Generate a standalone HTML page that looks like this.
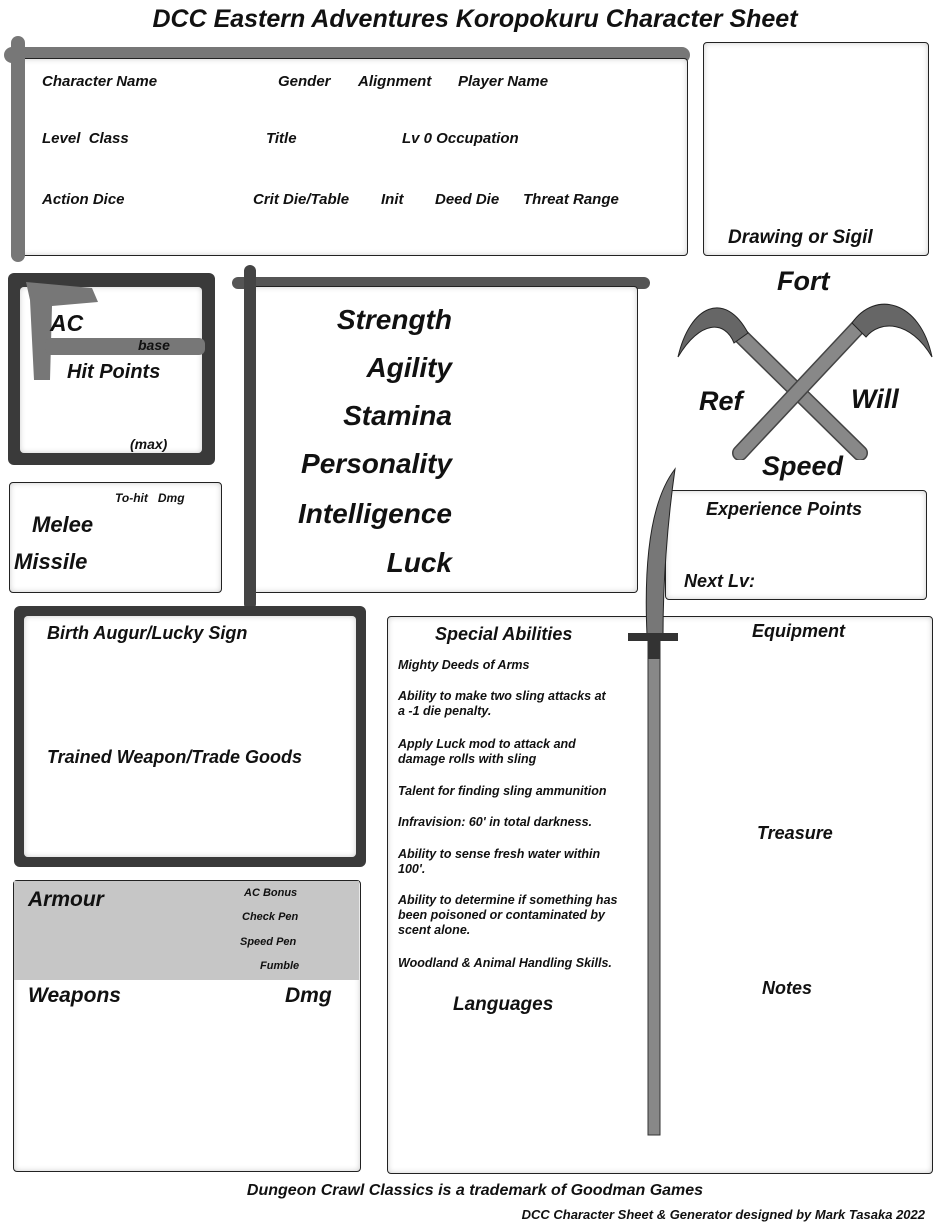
<!DOCTYPE html>
<html><head><meta charset="utf-8"><style>
body{margin:0;width:950px;height:1229px;background:#fff;position:relative;overflow:hidden;font-family:"Liberation Sans",sans-serif;font-style:italic;font-weight:bold;color:#111}
.a{position:absolute;white-space:nowrap;line-height:1}
.box{position:absolute;background:#fff;border:1.5px solid #222;border-radius:4px;box-shadow:inset 0 0 6px #ccc}
.s{font-size:15px}
.st{font-size:28px;text-align:right;width:260px;left:192px}
.ab{font-size:12.5px;font-weight:bold;left:398px;line-height:15px;white-space:normal;width:232px}
</style></head><body>
<div class="a" style="left:0;width:950px;text-align:center;top:7px;font-size:25px">DCC Eastern Adventures Koropokuru Character Sheet</div>

<div style="position:absolute;left:4px;top:47px;width:686px;height:16px;background:#777;border-radius:8px"></div>
<div class="box" style="left:18px;top:58px;width:668px;height:196px"></div>
<div style="position:absolute;left:11px;top:36px;width:14px;height:226px;background:#777;border-radius:7px"></div>
<div class="a s" style="left:42px;top:74px">Character Name</div>
<div class="a s" style="left:278px;top:74px">Gender</div>
<div class="a s" style="left:358px;top:74px">Alignment</div>
<div class="a s" style="left:458px;top:74px">Player Name</div>
<div class="a s" style="left:42px;top:131px">Level &nbsp;Class</div>
<div class="a s" style="left:266px;top:131px">Title</div>
<div class="a s" style="left:402px;top:131px">Lv 0 Occupation</div>
<div class="a s" style="left:42px;top:192px">Action Dice</div>
<div class="a s" style="left:253px;top:192px">Crit Die/Table</div>
<div class="a s" style="left:381px;top:192px">Init</div>
<div class="a s" style="left:435px;top:192px">Deed Die</div>
<div class="a s" style="left:523px;top:192px">Threat Range</div>
<div class="box" style="left:703px;top:42px;width:224px;height:212px"></div>
<div class="a" style="left:728px;top:228px;font-size:19px">Drawing or Sigil</div>

<div style="position:absolute;left:8px;top:273px;width:207px;height:192px;background:#3a3a3a;border-radius:6px"></div>
<div class="box" style="left:20px;top:287px;width:182px;height:166px;border:none"></div>
<svg class="a" style="left:20px;top:280px" width="80" height="105"><path d="M6 2 L72 8 L78 22 L32 26 L30 100 L14 100 L10 20 Z" fill="#777"/></svg>
<div style="position:absolute;left:45px;top:338px;width:160px;height:17px;background:#777;border-radius:6px"></div>
<div class="a" style="left:50px;top:312px;font-size:23px">AC</div>
<div class="a" style="left:138px;top:338px;font-size:14px">base</div>
<div class="a" style="left:67px;top:362px;font-size:20px">Hit Points</div>
<div class="a" style="left:130px;top:437px;font-size:14px">(max)</div>

<div class="box" style="left:9px;top:482px;width:211px;height:109px"></div>
<div class="a" style="left:115px;top:492px;font-size:12px">To-hit &nbsp;&nbsp;Dmg</div>
<div class="a" style="left:32px;top:514px;font-size:22px">Melee</div>
<div class="a" style="left:14px;top:551px;font-size:22px">Missile</div>

<div style="position:absolute;left:232px;top:277px;width:418px;height:12px;background:#555;border-radius:6px"></div>
<div class="box" style="left:250px;top:286px;width:386px;height:305px"></div>
<div style="position:absolute;left:244px;top:265px;width:12px;height:345px;background:#444;border-radius:6px"></div>
<div class="a st" style="top:306px">Strength</div>
<div class="a st" style="top:354px">Agility</div>
<div class="a st" style="top:402px">Stamina</div>
<div class="a st" style="top:450px">Personality</div>
<div class="a st" style="top:500px">Intelligence</div>
<div class="a st" style="top:549px">Luck</div>

<svg class="a" style="left:670px;top:285px" width="270" height="175">
<path d="M70 50 L190 168" stroke="#444" stroke-width="16" stroke-linecap="round"/>
<path d="M70 50 L190 168" stroke="#888" stroke-width="13" stroke-linecap="round"/>
<path d="M190 40 L70 168" stroke="#444" stroke-width="16" stroke-linecap="round"/>
<path d="M190 40 L70 168" stroke="#888" stroke-width="13" stroke-linecap="round"/>
<path d="M78 48 C55 5 20 20 8 72 C30 35 55 35 64 58 Z" fill="#666" stroke="#222"/>
<path d="M182 38 C205 5 250 15 262 72 C240 35 210 35 196 52 Z" fill="#666" stroke="#222"/>
</svg>
<div class="a" style="left:777px;top:268px;font-size:27px">Fort</div>
<div class="a" style="left:699px;top:388px;font-size:27px">Ref</div>
<div class="a" style="left:851px;top:386px;font-size:27px">Will</div>
<div class="a" style="left:762px;top:453px;font-size:27px">Speed</div>

<div class="box" style="left:665px;top:490px;width:260px;height:108px"></div>
<div class="a" style="left:706px;top:500px;font-size:18px">Experience Points</div>
<div class="a" style="left:684px;top:572px;font-size:18px">Next Lv:</div>

<div style="position:absolute;left:14px;top:606px;width:352px;height:261px;background:#3a3a3a;border-radius:6px"></div>
<div class="box" style="left:24px;top:616px;width:332px;height:241px;border:none"></div>
<div class="a" style="left:47px;top:624px;font-size:18px">Birth Augur/Lucky Sign</div>
<div class="a" style="left:47px;top:748px;font-size:18px">Trained Weapon/Trade Goods</div>

<div class="box" style="left:13px;top:880px;width:346px;height:290px"></div>
<div style="position:absolute;left:14px;top:881px;width:345px;height:99px;background:#c6c6c6"></div>
<div class="a" style="left:28px;top:889px;font-size:21px">Armour</div>
<div class="a" style="left:244px;top:888px;font-size:11px">AC Bonus</div>
<div class="a" style="left:242px;top:912px;font-size:11px">Check Pen</div>
<div class="a" style="left:240px;top:937px;font-size:11px">Speed Pen</div>
<div class="a" style="left:260px;top:961px;font-size:11px">Fumble</div>
<div class="a" style="left:28px;top:985px;font-size:21px">Weapons</div>
<div class="a" style="left:285px;top:985px;font-size:21px">Dmg</div>

<div class="box" style="left:387px;top:616px;width:544px;height:556px"></div>
<div class="a" style="left:435px;top:625px;font-size:18px">Special Abilities</div>
<div class="a ab" style="top:658px">Mighty Deeds of Arms</div>
<div class="a ab" style="top:689px">Ability to make two sling attacks at<br>a -1 die penalty.</div>
<div class="a ab" style="top:737px">Apply Luck mod to attack and<br>damage rolls with sling</div>
<div class="a ab" style="top:784px">Talent for finding sling ammunition</div>
<div class="a ab" style="top:815px">Infravision: 60' in total darkness.</div>
<div class="a ab" style="top:847px">Ability to sense fresh water within<br>100'.</div>
<div class="a ab" style="top:893px">Ability to determine if something has<br>been poisoned or contaminated by<br>scent alone.</div>
<div class="a ab" style="top:956px">Woodland &amp; Animal Handling Skills.</div>
<div class="a" style="left:453px;top:995px;font-size:19px">Languages</div>
<div class="a" style="left:752px;top:622px;font-size:18px">Equipment</div>
<div class="a" style="left:757px;top:824px;font-size:18px">Treasure</div>
<div class="a" style="left:762px;top:979px;font-size:18px">Notes</div>

<svg class="a" style="left:625px;top:465px" width="60" height="675">
<path d="M22 170 C18 80 30 30 50 4 C42 60 38 120 38 170 Z" fill="#777" stroke="#222"/>
<rect x="23" y="170" width="12" height="500" fill="#888" stroke="#333"/>
<rect x="3" y="168" width="50" height="8" fill="#333"/>
<rect x="23" y="176" width="12" height="18" fill="#333"/>
</svg>

<div class="a" style="left:0;width:950px;text-align:center;top:1183px;font-size:16px">Dungeon Crawl Classics is a trademark of Goodman Games</div>
<div class="a" style="right:25px;top:1208px;font-size:13px">DCC Character Sheet &amp; Generator designed by Mark Tasaka 2022</div>
</body></html>
